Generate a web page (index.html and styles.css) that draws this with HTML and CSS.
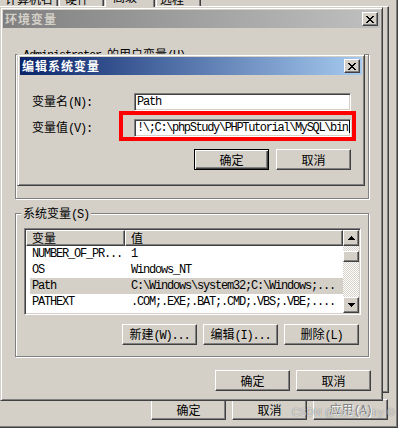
FILE: index.html
```html
<!doctype html>
<html lang="zh-CN">
    <head>
        <meta charset="UTF-8" />
        <title>编辑系统变量</title>
        <link rel="stylesheet" href="styles.css">
    </head>
    <body>
        <!-- 系统属性 (задний план) -->
        <div class="sys">
            <div class="tabs">
                <div class="tab tab-1"><span>计算机名</span></div>
                <div class="tab tab-2"><span>硬件</span></div>
                <div class="tab tab-3"><span>高级</span></div>
                <div class="tab tab-4"><span>远程</span></div>
            </div>
            <div class="panel"></div>
            <div class="sys-foot">
                <button class="btn">确定</button>
                <button class="btn">取消</button>
                <button class="btn" disabled>应用<span class="m">(A)</span></button>
            </div>
        </div>

        <!-- 环境变量 -->
        <div class="win env">
            <div class="title inactive">
                <span>环境变量</span>
                <span class="close">
                    <svg width="8" height="7" viewBox="0 0 8 7" shape-rendering="crispEdges"><path d="M0 0h2v1H0zM6 0h2v1H6zM1 1h2v1H1zM5 1h2v1H5zM2 2h4v1H2zM3 3h2v1H3zM2 4h4v1H2zM1 5h2v1H1zM5 5h2v1H5zM0 6h2v1H0zM6 6h2v1H6z" fill="#000"/></svg>
                </span>
            </div>
            <div class="env-body">
                <div class="group user-group">
                    <div class="group-title"><span class="m">Administrator </span>的用户变量<span class="m">(U)</span></div>
                    <div class="list list-empty"></div>
                    <div class="btn-row">
                        <button class="btn">新建<span class="m">(N)...</span></button>
                        <button class="btn">编辑<span class="m">(E)...</span></button>
                        <button class="btn">删除<span class="m">(D)</span></button>
                    </div>
                </div>

                <div class="group sys-group">
                    <div class="group-title">系统变量<span class="m">(S)</span></div>
                    <div class="list">
                        <div class="list-main">
                            <div class="list-head">
                                <div class="hcell hcell-name">变量</div>
                                <div class="hcell hcell-value">值</div>
                            </div>
                            <div class="row m"><div class="c1">NUMBER_OF_PR...</div><div class="c2">1</div></div>
                            <div class="row m"><div class="c1">OS</div><div class="c2">Windows_NT</div></div>
                            <div class="row m sel"><div class="c1">Path</div><div class="c2">C:\Windows\system32;C:\Windows;...</div></div>
                            <div class="row m"><div class="c1">PATHEXT</div><div class="c2">.COM;.EXE;.BAT;.CMD;.VBS;.VBE;....</div></div>
                        </div>
                        <div class="vscroll">
                            <div class="sb-btn">
                                <svg width="7" height="4" viewBox="0 0 7 4" shape-rendering="crispEdges"><path d="M3 0h1v1h1v1h1v1h1v1H0V3h1V2h1V1h1z" fill="#000"/></svg>
                            </div>
                            <div class="thumb"></div>
                            <div class="sb-btn sb-down">
                                <svg width="7" height="4" viewBox="0 0 7 4" shape-rendering="crispEdges"><path d="M0 0h7v1H6v1H5v1H4v1H3V3H2V2H1V1H0z" fill="#000"/></svg>
                            </div>
                        </div>
                    </div>
                    <div class="btn-row">
                        <button class="btn">新建<span class="m">(W)...</span></button>
                        <button class="btn">编辑<span class="m">(I)...</span></button>
                        <button class="btn">删除<span class="m">(L)</span></button>
                    </div>
                </div>

                <div class="env-foot">
                    <button class="btn">确定</button>
                    <button class="btn">取消</button>
                </div>
            </div>
        </div>

        <!-- 编辑系统变量 -->
        <div class="win edit">
            <div class="title">
                <span>编辑系统变量</span>
                <span class="close">
                    <svg width="8" height="7" viewBox="0 0 8 7" shape-rendering="crispEdges"><path d="M0 0h2v1H0zM6 0h2v1H6zM1 1h2v1H1zM5 1h2v1H5zM2 2h4v1H2zM3 3h2v1H3zM2 4h4v1H2zM1 5h2v1H1zM5 5h2v1H5zM0 6h2v1H0zM6 6h2v1H6z" fill="#000"/></svg>
                </span>
            </div>
            <div class="edit-body">
                <div class="field">
                    <label>变量名<span class="m">(N):</span></label>
                    <div class="input m">Path</div>
                </div>
                <div class="field">
                    <label>变量值<span class="m">(V):</span></label>
                    <div class="input input-long m">!\;C:\phpStudy\PHPTutorial\MySQL\bin<span class="caret"></span></div>
                </div>
                <div class="edit-foot">
                    <button class="btn default">确定</button>
                    <button class="btn">取消</button>
                </div>
            </div>
        </div>

        <div class="mark"></div>
        <div class="watermark">CSDN @dare-to-try ©</div>
    </body>
</html>
```

FILE: styles.css
```css
* {
    box-sizing: border-box;
}
body {
    margin: 0;
    width: 398px;
    height: 428px;
    overflow: hidden;
    position: relative;
    background: #d4d0c8;
    color: #000;
    font: 12px/14px "Noto Sans CJK SC", sans-serif;
}
.m {
    font-family: "Liberation Mono", "Noto Sans CJK SC", monospace;
    letter-spacing: -1.2px;
}

/* кнопки */
.btn {
    width: 75px;
    height: 21px;
    padding: 0;
    font: inherit;
    line-height: 18px;
    color: #000;
    background: #d4d0c8;
    border: 1px solid;
    border-color: #fff #404040 #404040 #fff;
    box-shadow: inset -1px -1px #808080;
}
.btn.default {
    border-color: #000;
    box-shadow: inset 1px 1px #fff, inset -1px -1px #404040, inset -2px -2px #808080;
}
.btn:disabled {
    color: #808080;
    text-shadow: 1px 1px #fff;
}

/* 系统属性 */
.sys {
    height: 100%;
    display: flex;
    flex-direction: column;
    border-right: 1px solid #404040;
    border-bottom: 1px solid #404040;
    box-shadow: inset -1px -1px #808080;
}
.tabs {
    display: flex;
    height: 6px;
}
.tab {
    height: 6px;
    overflow: hidden;
    line-height: 12px;
    border-left: 1px solid #fff;
    border-right: 1px solid #404040;
    box-shadow: inset -1px 0 #808080;
}
.tab span {
    display: block;
    margin-top: -7px;
}
.tab-1 {
    width: 58px;
    border-left: none;
    padding-left: 5px;
}
.tab-2 {
    width: 45px;
    margin-left: 1px;
    padding-left: 5px;
}
.tab-3 {
    width: 50px;
    height: 7px;
    margin-left: 1px;
    padding-left: 7px;
    position: relative;
    z-index: 1;
    background: #d4d0c8;
}
.tab-3 span {
    margin-top: -9px;
}
.tab-4 {
    width: 45px;
    margin-left: 1px;
    padding-left: 3px;
}
.panel {
    height: 387px;
    margin-right: 8px;
    border-top: 1px solid #fff;
    border-right: 1px solid #404040;
    border-bottom: 1px solid #404040;
    box-shadow: inset -1px -1px #808080;
}
.sys-foot {
    display: flex;
    justify-content: flex-end;
    gap: 6px;
    margin: 6px 9px 0 0;
}

/* окна */
.win {
    position: absolute;
    display: flex;
    flex-direction: column;
    padding: 2px;
    background: #d4d0c8;
    border: 1px solid;
    border-color: #d4d0c8 #404040 #404040 #d4d0c8;
    box-shadow: inset 1px 1px #fff, inset -1px -1px #808080;
}
.env {
    left: 0;
    top: 7px;
    width: 383px;
    height: 394px;
}
.edit {
    left: 17px;
    top: 54px;
    width: 348px;
    height: 132px;
}
.title {
    height: 18px;
    flex: none;
    display: flex;
    align-items: center;
    justify-content: space-between;
    padding: 0 2px;
    font-weight: bold;
    letter-spacing: 1px;
    color: #fff;
    background: linear-gradient(to right, #0a246a, #a6caf0);
}
.title.inactive {
    color: #d4d0c8;
    background: linear-gradient(to right, #808080, #c0c0c0);
}
.close {
    width: 16px;
    height: 14px;
    display: flex;
    align-items: center;
    justify-content: center;
    background: #d4d0c8;
    border: 1px solid;
    border-color: #fff #404040 #404040 #fff;
    box-shadow: inset -1px -1px #808080;
}

/* 环境变量 */
.env-body {
    flex: 1;
    display: flex;
    flex-direction: column;
    padding: 26px 9px 0 12px;
}
.group {
    margin-right: 2px;
    padding: 0 7px 10px 8px;
    border: 1px solid #808080;
    box-shadow: 1px 1px #fff, inset 1px 1px #fff;
}
.user-group {
    padding-bottom: 12px;
}
.sys-group {
    margin-top: 14px;
    padding-bottom: 11px;
}
.group-title {
    display: table;
    height: 12px;
    margin: -7px 0 0 -3px;
    padding: 0 2px;
    line-height: 12px;
    background: #d4d0c8;
}
.btn-row {
    display: flex;
    justify-content: flex-end;
    gap: 6px;
    margin: 9px 2px 0 0;
}
.env-foot {
    display: flex;
    justify-content: flex-end;
    gap: 6px;
    margin-top: 13px;
}

/* список */
.list {
    display: flex;
    height: 87px;
    margin-top: 7px;
    padding: 1px;
    background: #fff;
    border: 1px solid;
    border-color: #808080 #fff #fff #808080;
    box-shadow: inset 1px 1px #404040, inset -1px -1px #d4d0c8;
}
.list-main {
    flex: 1;
    overflow: hidden;
}
.list-head {
    display: flex;
    height: 16px;
}
.hcell {
    padding-left: 5px;
    line-height: 13px;
    background: #d4d0c8;
    border: 1px solid;
    border-color: #fff #404040 #404040 #fff;
    box-shadow: inset -1px -1px #808080;
}
.hcell-name {
    width: 99px;
}
.hcell-value {
    flex: 1;
}
.row {
    display: flex;
    height: 16px;
    line-height: 16px;
    margin-left: 4px;
    white-space: nowrap;
}
.row.sel {
    background: #d4d0c8;
}
.c1 {
    width: 95px;
    padding-left: 2px;
}
.c2 {
    flex: 1;
    padding-left: 6px;
}
.vscroll {
    width: 16px;
    display: flex;
    flex-direction: column;
    background: repeating-conic-gradient(#d4d0c8 0 25%, #fff 0 50%) 0 0 / 2px 2px;
}
.sb-btn,
.thumb {
    background: #d4d0c8;
    border: 1px solid;
    border-color: #fff #404040 #404040 #fff;
    box-shadow: inset -1px -1px #808080;
}
.sb-btn {
    height: 16px;
    display: flex;
    align-items: center;
    justify-content: center;
}
.thumb {
    height: 11px;
    margin-top: 5px;
}
.sb-down {
    margin-top: auto;
}

/* 编辑系统变量 */
.edit-body {
    flex: 1;
    padding: 18px 11px 0 12px;
}
.field {
    display: flex;
    align-items: center;
    height: 18px;
}
.field + .field {
    margin-top: 8px;
}
.field label {
    width: 102px;
}
.input {
    flex: 1;
    height: 18px;
    padding: 0 2px;
    line-height: 16px;
    white-space: nowrap;
    overflow: hidden;
    background: #fff;
    border: 1px solid;
    border-color: #808080 #fff #fff #808080;
    box-shadow: inset 1px 1px #404040, inset -1px -1px #d4d0c8;
}
.input-long {
    letter-spacing: -1.35px;
}
.caret {
    display: inline-block;
    width: 1px;
    height: 13px;
    margin-left: 1px;
    vertical-align: -2px;
    background: #000;
}
.edit-foot {
    display: flex;
    justify-content: flex-end;
    gap: 7px;
    margin-top: 12px;
}

/* пометки поверх скриншота */
.mark {
    position: absolute;
    left: 119px;
    top: 111px;
    width: 237px;
    height: 30px;
    border: 4px solid #f00;
}
.watermark {
    position: absolute;
    left: 292px;
    top: 406px;
    font: 10.5px/12px "Liberation Sans", sans-serif;
    color: rgba(255, 255, 255, 0.75);
    text-shadow: 0 0 1px rgba(0, 0, 0, 0.6);
    white-space: nowrap;
}
```
